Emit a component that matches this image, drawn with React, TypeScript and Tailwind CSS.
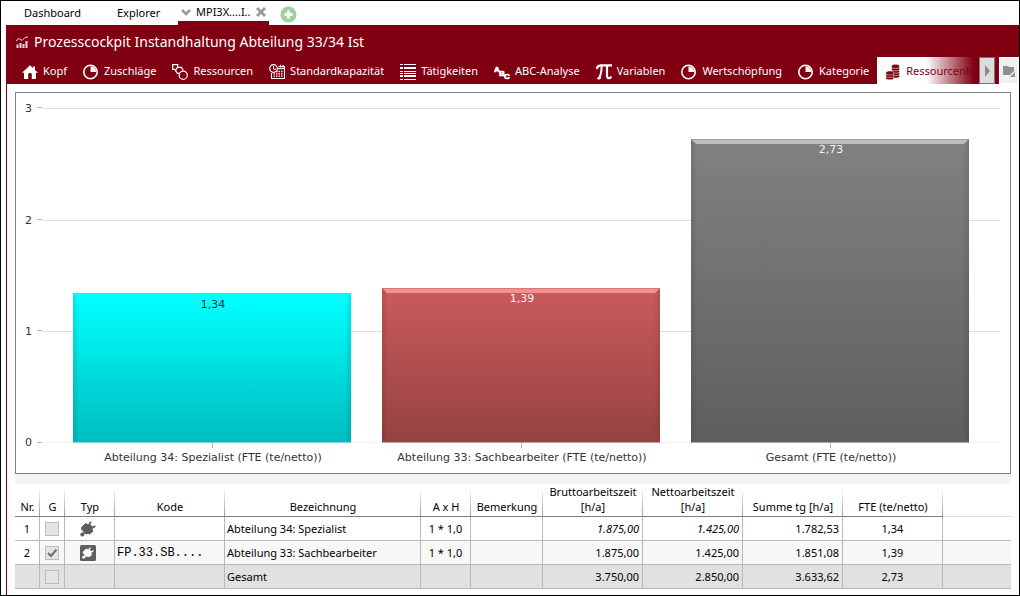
import type { ReactNode } from "react";

const HomeIcon = () => (
  <svg className="size-4 shrink-0" viewBox="0 0 16 16" fill="currentColor">
    <path d="M8 1.2 0 8.8h2V15h4.2v-4.5c0-.8.6-1.4 1.8-1.4s1.8.6 1.8 1.4V15H14V8.8h2L13 6V2.5h-2v1.6z" />
  </svg>
);

const PieIcon = () => (
  <svg className="size-4 shrink-0" viewBox="0 0 16 16">
    <circle cx="7.5" cy="8" r="6.7" fill="none" stroke="currentColor" strokeWidth="1.6" />
    <path d="M7.5 8V2.3A5.7 5.7 0 0 1 13.2 8z" fill="currentColor" />
  </svg>
);

const ShapesIcon = () => (
  <svg className="size-4 shrink-0" viewBox="0 0 16 16" fill="none" stroke="currentColor" strokeWidth="1.2">
    <path d="M3 5.4H.7V.7h5v2.4" />
    <path d="M8 9.4H5.4L3.4 6.4l2-3h4l1.8 2.8" />
    <circle cx="11.2" cy="11.2" r="4.1" />
  </svg>
);

const ScheduleIcon = () => (
  <svg className="size-4 shrink-0" viewBox="0 0 16 16" fill="none" stroke="currentColor">
    <circle cx="4.5" cy="4.5" r="3.8" strokeWidth="1.2" />
    <path d="M4.5 2v3.2H7" strokeWidth="1" />
    <path d="M9.5 2.5h6v12h-13V9" strokeWidth="1.1" />
    <path d="M9 4.5h6.5" strokeWidth="1.2" />
    <path d="M11.5.8v2.5M14 .8v2.5" strokeWidth="1" />
    <path d="M7 7.5h7M4.5 9.8h9.5M4.5 12.2h9.5" strokeDasharray="1.5 1" strokeWidth="1.3" />
  </svg>
);

const ListIcon = () => (
  <svg className="size-4 shrink-0" viewBox="0 0 16 16" fill="currentColor" shapeRendering="crispEdges">
    <path d="M0 0h3v1H0zM4 0h12v1H4zM0 3h3v2H0zM4 3h12v2H4zM0 7h3v1H0zM4 7h12v1H4zM0 9h3v1H0zM4 9h12v1H4zM0 11h3v2H0zM4 11h12v2H4zM0 15h3v1H0zM4 15h12v1H4z" />
  </svg>
);

const AbcIcon = () => (
  <svg className="size-4 shrink-0 font-['Liberation_Sans'] font-bold" viewBox="0 0 16 16" fill="currentColor" stroke="currentColor" strokeWidth=".7" aria-hidden="true">
    <text x="0 5 10" y="8 11.5 15" fontSize="8">ABC</text>
  </svg>
);

const PiIcon = () => (
  <svg className="size-4 shrink-0" viewBox="0 0 16 16" fill="none" stroke="currentColor">
    <path d="M.6 4.8C1.4 2 2.8 1.4 4.5 1.4H16" strokeWidth="2.4" />
    <path d="M5.6 2c0 5.5-.6 9-2.6 12.2" strokeWidth="2" />
    <path d="M1.4 14c1.2 1 2.4.7 3.2-1.2" strokeWidth="1.9" />
    <path d="M11 2v9.5c0 3.6 2.8 3.4 4.3 1" strokeWidth="2.2" />
  </svg>
);

const CoinsIcon = () => (
  <svg className="size-4 shrink-0" viewBox="0 0 16 16" fill="currentColor">
    {[11.8, 9.4, 7, 4.6, 2.2].map((y) => (
      <path key={y} d={`M6.5 ${y - 0.2}c0-2.2 8-2.2 8 0v.9c0 2-8 2-8 0z`} stroke="#fff" strokeWidth=".5" />
    ))}
    {[13.4, 11, 8.6].map((y) => (
      <path key={y} d={`M.8 ${y}c0-2.2 8-2.2 8 0v.9c0 2-8 2-8 0z`} stroke="#fff" strokeWidth=".5" />
    ))}
  </svg>
);

const TitleIcon = () => (
  <svg className="size-3 shrink-0" viewBox="0 0 12 12" fill="none" stroke="currentColor" opacity=".85">
    <path d="M1.5 12V8.5M4.5 12V7M7.5 12V8M10.5 12V5" strokeWidth="2" />
    <path d="M0 5 3 2.5l3 2L9 1.5l3-.5" strokeWidth="1" />
  </svg>
);

const PlugShape = ({ fill }: { fill: string }) => (
  <g fill={fill} stroke={fill}>
    <path d="M1.5 6.5 5.5 2.5 7 3.5 8.2 3 12.5 7.5 12 9 13 10.2 9.5 13 8 12.2 6 13 1.5 8z" strokeWidth="1" strokeLinejoin="round" />
    <path d="M11.3 1.1a2.8 2.8 0 1 0 3.7 3.6" fill="none" strokeWidth="1.8" />
    <path d="M10 7l2-2" strokeWidth="3" />
    <circle cx="2.3" cy="13.5" r="1.6" />
    <path d="m2.5 13 3-2" strokeWidth="2" />
  </g>
);

const PlugIcon = () => (
  <svg className="inline size-4" viewBox="0 0 16 16">
    <PlugShape fill="#5f5f5f" />
  </svg>
);

const PlugBoxIcon = () => (
  <svg className="inline size-4" viewBox="0 0 16 16">
    <rect width="16" height="16" rx="1.5" fill="#5f5f5f" />
    <g transform="translate(2 2) scale(.75)">
      <PlugShape fill="#ffffff" />
    </g>
  </svg>
);

const tabs: { label: string; icon: ReactNode }[] = [
  { label: "Kopf", icon: <HomeIcon /> },
  { label: "Zuschläge", icon: <PieIcon /> },
  { label: "Ressourcen", icon: <ShapesIcon /> },
  { label: "Standardkapazität", icon: <ScheduleIcon /> },
  { label: "Tätigkeiten", icon: <ListIcon /> },
  { label: "ABC-Analyse", icon: <AbcIcon /> },
  { label: "Variablen", icon: <PiIcon /> },
  { label: "Wertschöpfung", icon: <PieIcon /> },
  { label: "Kategorie", icon: <PieIcon /> },
];

const bars = [
  { id: "cyan", x: 57, top: 200, value: "1,34", label: "Abteilung 34: Spezialist (FTE (te/netto))", from: "#00ffff", to: "#00bcbe", edge: "#00ffff", text: "#333333", valueY: 215 },
  { id: "red", x: 366, top: 195, value: "1,39", label: "Abteilung 33: Sachbearbeiter (FTE (te/netto))", from: "#c85a5a", to: "#964242", edge: "#f59090", text: "#f4f4f4", valueY: 209 },
  { id: "gray", x: 675, top: 46, value: "2,73", label: "Gesamt (FTE (te/netto))", from: "#808080", to: "#5e5e5e", edge: "#bdbdbd", text: "#f4f4f4", valueY: 60 },
];

const axis = [
  { value: 3, y: 15 },
  { value: 2, y: 127 },
  { value: 1, y: 238 },
  { value: 0, y: 349 },
];

const Chart = () => (
  <svg className="block h-auto w-full font-['Verdana','DejaVu_Sans',sans-serif] text-[11px]" viewBox="0 0 994 380" role="img" aria-label="FTE (te/netto)">
    <defs>
      {bars.map((b) => (
        <linearGradient key={b.id} id={b.id} x1="0" y1="0" x2="0" y2="1">
          <stop offset="0.04" stopColor={b.from} />
          <stop offset="1" stopColor={b.to} />
        </linearGradient>
      ))}
      <linearGradient id="bevelLeft">
        <stop offset="0" stopOpacity="0.1" />
        <stop offset="1" stopOpacity="0.01" />
      </linearGradient>
      <linearGradient id="bevelRight">
        <stop offset="0" stopOpacity="0.01" />
        <stop offset="1" stopOpacity="0.1" />
      </linearGradient>
    </defs>
    {axis.map((a) => (
      <g key={a.value}>
        <path d={`M26 ${a.y}h958v1H26z`} fill={a.value ? "#dedede" : "#f2f2f2"} />
        <path d={`M21 ${a.value ? a.y - 1 : a.y}h5v1h-5z`} fill="#b4b4b4" />
        <text x="9" y={a.y + 4} fill="#333333">{a.value}</text>
      </g>
    ))}
    {bars.map((b) => (
      <g key={b.id}>
        <path d={`M${b.x} ${b.top}h278V349h-278z`} fill={`url(#${b.id})`} />
        <path d={`M${b.x} ${b.top}l6 6V343l-6 6z`} fill="url(#bevelLeft)" />
        <path d={`M${b.x + 278} ${b.top}l-6 6V343l6 6z`} fill="url(#bevelRight)" />
        <path d={`M${b.x} ${b.top}h278l-5 5h-268z`} fill={b.edge} />
        <path d={`M${b.x} ${b.top}h278v1h-278z`} fill={b.to} opacity={b.id === "cyan" ? 0 : 0.3} />
        <path d={`M${b.x} 349h278v1h-278z`} fill={b.to} opacity="0.5" />
        <path d={`M${b.x + 139} 350h1v5h-1z`} fill="#b4b4b4" />
        <text x={b.x + 140} y={b.valueY} textAnchor="middle" fill={b.text}>{b.value}</text>
        <text x={b.x + 140} y="368" textAnchor="middle" fill="#333333">{b.label}</text>
      </g>
    ))}
  </svg>
);

const columns = [
  { title: "Nr.", width: "w-[25px]" },
  { title: "G", width: "w-[25px]" },
  { title: "Typ", width: "w-[50px]" },
  { title: "Kode", width: "w-[110px]" },
  { title: "Bezeichnung", width: "w-[196px]" },
  { title: "A x H", width: "w-[50px]" },
  { title: "Bemerkung", width: "w-[72px]" },
  { title: "Bruttoarbeitszeit [h/a]", width: "w-[100px]" },
  { title: "Nettoarbeitszeit [h/a]", width: "w-[100px]" },
  { title: "Summe tg [h/a]", width: "w-[100px]" },
  { title: "FTE (te/netto)", width: "w-[100px]" },
];

const rows = [
  { nr: "1", checked: false, icon: <PlugIcon />, code: "", name: "Abteilung 34: Spezialist", axh: "1 * 1,0", gross: "1.875,00", net: "1.425,00", sum: "1.782,53", fte: "1,34", row: "bg-white", num: "italic" },
  { nr: "2", checked: true, icon: <PlugBoxIcon />, code: "FP.33.SB....", name: "Abteilung 33: Sachbearbeiter", axh: "1 * 1,0", gross: "1.875,00", net: "1.425,00", sum: "1.851,08", fte: "1,39", row: "bg-[#f7f7f7]", num: "" },
  { nr: "", checked: false, icon: null, code: "", name: "Gesamt", axh: "", gross: "3.750,00", net: "2.850,00", sum: "3.633,62", fte: "2,73", row: "bg-[#e1e1e1]", num: "" },
];

const cell = "h-6 border-r border-b border-[#b8b8b8] py-0 whitespace-nowrap";

const ResourceTable = () => (
  <table className="w-full table-fixed border-separate border-spacing-0 leading-[15px]">
    <thead>
      <tr className="h-[33px]">
        {columns.map((c) => (
          <th key={c.title} className={`${c.width} border-b border-[#808080] bg-[linear-gradient(to_top,#9a9a9a,#ffffff)] bg-[length:1px_28px] bg-right-bottom bg-no-repeat p-0 pb-[2px] align-bottom font-normal`}>
            {c.title}
          </th>
        ))}
        <th className="border-b border-[#dddddd] p-0" aria-label="Leer" />
      </tr>
    </thead>
    <tbody>
      {rows.map((r) => (
        <tr key={r.name} className={r.row}>
          <td className={`${cell} px-0 text-center ${r.nr ? "bg-white" : ""}`}>{r.nr}</td>
          <td className={`${cell} px-0`}>
            <label className="relative mx-auto block size-[14px]">
              <input type="checkbox" disabled checked={r.checked} readOnly aria-label={`G ${r.name}`} className="block size-[14px] appearance-none border border-[#bcbcbc] bg-[#e4e4e4]" />
              {r.checked && (
                <svg className="absolute inset-0 size-[14px]" viewBox="0 0 14 14" fill="none" stroke="#6e6e6e" strokeWidth="2">
                  <path d="m3 7 3 3 5.5-6.5" />
                </svg>
              )}
            </label>
          </td>
          <td className={`${cell} pr-1 text-center`}>{r.icon}</td>
          <td className={`${cell} pt-px pl-[2px] font-['Courier_New','Liberation_Mono',monospace] text-xs`}>{r.code}</td>
          <td className={`${cell} pl-[2px]`}>{r.name}</td>
          <td className={`${cell} text-center`}>{r.axh}</td>
          <td className={cell} />
          <td className={`${cell} pr-[3px] text-right ${r.num}`}>{r.gross}</td>
          <td className={`${cell} pr-[3px] text-right ${r.num}`}>{r.net}</td>
          <td className={`${cell} pr-[3px] text-right`}>{r.sum}</td>
          <td className={`${cell} text-center`}>{r.fte}</td>
          <td className="border-b border-[#b8b8b8] p-0" />
        </tr>
      ))}
    </tbody>
  </table>
);

const App = () => {
  return (
    <div className="flex min-h-screen flex-col border border-black bg-white font-['Noto_Sans',sans-serif] text-[11px] text-black">
      {/* Window tabs */}
      <nav className="flex h-6 items-stretch leading-[22px]">
        <button className="ml-[23px] w-[57px] text-left whitespace-nowrap">Dashboard</button>
        <button className="ml-9 w-[44px] text-left whitespace-nowrap">Explorer</button>
        <div className="ml-[17px] flex w-[91px] items-center gap-[5px] border-b-4 border-[#800012] px-[3px] pt-[2px]">
          <svg className="h-2 w-[10px] shrink-0" viewBox="0 0 10 8" fill="none" stroke="#9a9a9a" strokeWidth="2.5">
            <path d="m1 2 4 4 4-4" />
          </svg>
          <button className="w-[55px] text-left whitespace-nowrap">MPI3X....I..</button>
          <button aria-label="Schließen">
            <svg className="size-[10px]" viewBox="0 0 10 10" stroke="#999999" strokeWidth="2.8">
              <path d="m1 1 8 8M9 1 1 9" />
            </svg>
          </button>
        </div>
        <button className="ml-[11px] pt-[2px]" aria-label="Neuer Tab">
          <svg className="size-[17px]" viewBox="0 0 17 17">
            <circle cx="8.5" cy="8.5" r="8" fill="#9fd09f" />
            <path d="M8.5 4.5v8M4.5 8.5h8" stroke="#ffffff" strokeWidth="3" />
          </svg>
        </button>
      </nav>

      <main className="ml-[5px] flex grow flex-col border-l border-[#800012]">
        <header className="bg-[#800012] text-white">
          <h1 className="flex h-8 items-center gap-[6px] pt-px pl-[9px] text-sm">
            <TitleIcon />
            Prozesscockpit Instandhaltung Abteilung 33/34 Ist
          </h1>
          <div className="flex h-[27px]">
            <div className="relative flex min-w-0 grow overflow-hidden pl-[7px]">
              {tabs.map((t) => (
                <button key={t.label} className="flex shrink-0 items-center gap-[5px] px-2 pt-[2px] whitespace-nowrap">
                  {t.icon}
                  {t.label}
                </button>
              ))}
              <button className="flex min-w-0 grow items-center gap-[5px] overflow-hidden bg-white px-2 pt-[2px] whitespace-nowrap text-[#800012]">
                <CoinsIcon />
                Ressourcenb
              </button>
              <span className="absolute inset-y-0 right-0 w-[53px] bg-linear-to-r from-transparent to-[#800012] to-90%" />
            </div>
            <button aria-label="Weiter" className="flex w-4 shrink-0 items-center justify-center border border-[#777777] bg-[#dddddd]">
              <svg className="h-3 w-[5px]" viewBox="0 0 5 12" fill="#8a8a8a">
                <path d="M0 0l5 6-5 6z" />
              </svg>
            </button>
            <button aria-label="Ordner" className="ml-1 flex w-5 shrink-0 items-center justify-center border border-white bg-[#f0f0f0]">
              <svg className="h-3 w-3" viewBox="0 0 12 12" fill="#8f8f8f">
                <path d="M0 1h5l1 1h5v4L7 10H0z" />
                <path d="M12 7v5H7z" />
              </svg>
            </button>
          </div>
        </header>

        <div className="mx-2 mt-2">
          <div className="border border-[#808080]">
            <Chart />
          </div>
          <div className="h-[10px] bg-[#f4f4f4]" />
          <ResourceTable />
        </div>
      </main>
    </div>
  );
};

export default App;
